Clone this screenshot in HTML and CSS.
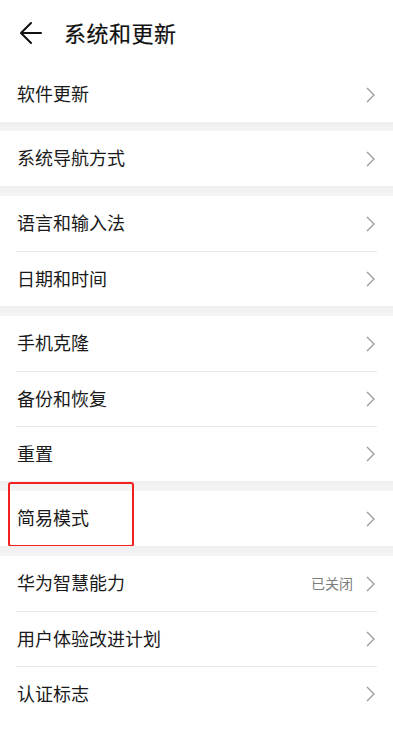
FILE: index.html
```html
<!DOCTYPE html>
<html lang="zh-CN">
  <head>
    <meta charset="UTF-8" />
    <meta name="viewport" content="width=device-width, initial-scale=1.0" />
    <title>系统和更新</title>
    <link rel="stylesheet" href="styles.css">
  </head>
  <body>
    <!-- 顶部标题栏 -->
    <div class="topBar">
      <svg class="backIcon" width="22" height="22" viewBox="0 0 22 22">
        <path d="M1 11 H21 M11 1 L1 11 L11 21" fill="none" stroke="#111" stroke-width="2" stroke-linecap="round" stroke-linejoin="round"/>
      </svg>
      <div class="pageTitle">系统和更新</div>
    </div>

    <div class="group first">
      <div class="item"><span class="itemName">软件更新</span><svg class="arrow" viewBox="0 0 9 16"><path d="M1 1 L8 8 L1 15"/></svg></div>
    </div>

    <div class="group">
      <div class="item"><span class="itemName">系统导航方式</span><svg class="arrow" viewBox="0 0 9 16"><path d="M1 1 L8 8 L1 15"/></svg></div>
    </div>

    <div class="group">
      <div class="item"><span class="itemName">语言和输入法</span><svg class="arrow" viewBox="0 0 9 16"><path d="M1 1 L8 8 L1 15"/></svg></div>
      <div class="item"><span class="itemName">日期和时间</span><svg class="arrow" viewBox="0 0 9 16"><path d="M1 1 L8 8 L1 15"/></svg></div>
    </div>

    <div class="group">
      <div class="item"><span class="itemName">手机克隆</span><svg class="arrow" viewBox="0 0 9 16"><path d="M1 1 L8 8 L1 15"/></svg></div>
      <div class="item"><span class="itemName">备份和恢复</span><svg class="arrow" viewBox="0 0 9 16"><path d="M1 1 L8 8 L1 15"/></svg></div>
      <div class="item"><span class="itemName">重置</span><svg class="arrow" viewBox="0 0 9 16"><path d="M1 1 L8 8 L1 15"/></svg></div>
    </div>

    <div class="group">
      <div class="item">
        <span class="itemName">简易模式</span><svg class="arrow" viewBox="0 0 9 16"><path d="M1 1 L8 8 L1 15"/></svg>
        <!-- 红框标注 -->
        <div class="redMark"></div>
      </div>
    </div>

    <div class="group">
      <div class="item"><span class="itemName">华为智慧能力</span><span class="itemValue">已关闭</span><svg class="arrow" viewBox="0 0 9 16"><path d="M1 1 L8 8 L1 15"/></svg></div>
      <div class="item"><span class="itemName">用户体验改进计划</span><svg class="arrow" viewBox="0 0 9 16"><path d="M1 1 L8 8 L1 15"/></svg></div>
      <div class="item"><span class="itemName">认证标志</span><svg class="arrow" viewBox="0 0 9 16"><path d="M1 1 L8 8 L1 15"/></svg></div>
    </div>
  </body>
</html>
```

FILE: styles.css
```css
* {
  margin: 0;
  padding: 0;
  box-sizing: border-box;
}
body {
  width: 393px;
  min-height: 731px;
  background: #fff;
  font-family: "Noto Sans CJK SC", "Noto Sans", sans-serif;
  color: #1a1a1a;
}
.topBar {
  height: 67px;
  display: flex;
  align-items: center;
  padding: 0 0 3px 20px;
}
.backIcon {
  display: block;
  margin-top: 2px;
}
.pageTitle {
  margin-left: 22px;
  font-size: 22px;
  font-weight: 400;
  -webkit-text-stroke: 0.2px #111;
  color: #111;
  letter-spacing: 0.5px;
}
.group {
  margin-top: 10px;
  position: relative;
  background: #fff;
}
.group.first {
  margin-top: 0;
}
/* 分组之间的灰色间隔 */
.group::before {
  content: "";
  display: block;
  height: 10px;
  margin-top: -10px;
  background: linear-gradient(#efefef, #f5f5f5);
}
.group.first::before {
  display: none;
}
.group.first + .group {
  margin-top: 9px;
}
.group.first + .group::before {
  height: 9px;
  margin-top: -9px;
}
.item {
  position: relative;
  height: 55px;
  display: flex;
  align-items: center;
  padding: 0 18px 0 17px;
}
.item + .item {
  border-top: 1px solid #e8e8e8;
  border-image: linear-gradient(to right, transparent 17px, #e8e8e8 17px, #e8e8e8 376px, transparent 376px) 1;
}
.itemName {
  flex: 1;
  font-size: 18px;
  color: #1a1a1a;
  margin-bottom: 3px;
}
.itemValue {
  font-size: 14px;
  color: #7d7d7d;
  margin-right: 13px;
  margin-bottom: 2px;
}
.arrow {
  display: block;
  width: 9px;
  height: 16px;
  fill: none;
  stroke: #9a9a9a;
  stroke-width: 1.3;
}
.redMark {
  position: absolute;
  left: 8px;
  top: -9px;
  width: 126px;
  height: 65px;
  border: 2.5px solid #f41f1f;
  border-radius: 3px;
}
```
